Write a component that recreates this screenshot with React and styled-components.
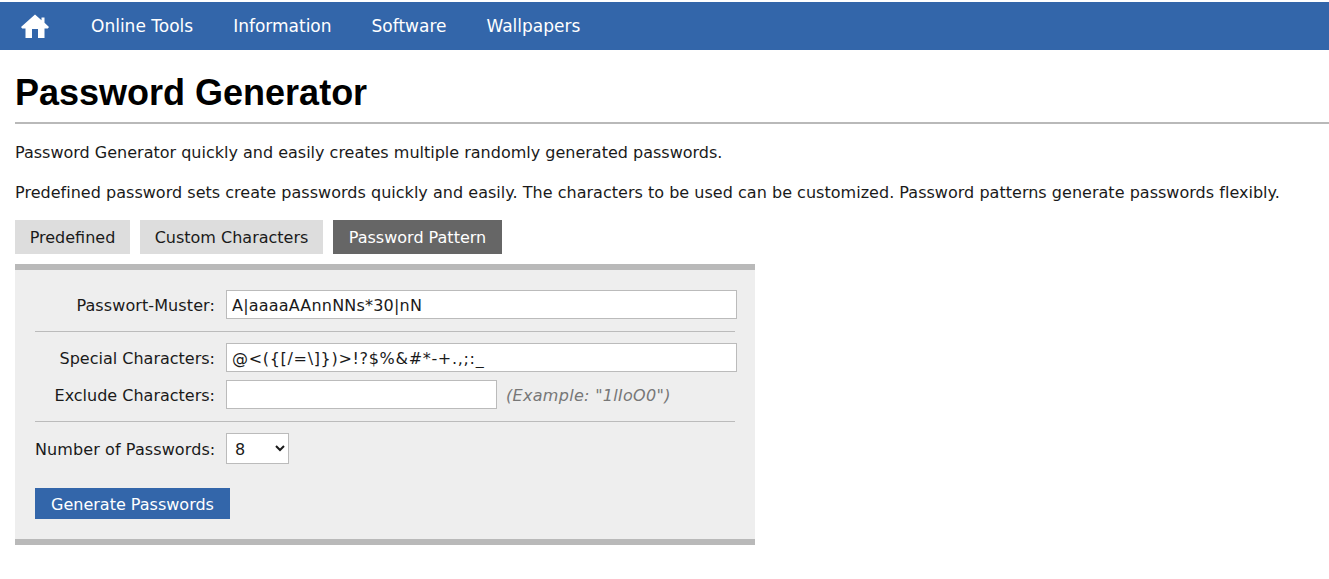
import React from 'react';
import styled, { createGlobalStyle } from 'styled-components';

const GlobalStyle = createGlobalStyle`
  html, body {
    margin: 0;
    padding: 0;
    background: #fff;
  }
  body {
    font-family: "DejaVu Sans", Verdana, sans-serif;
    font-size: 16px;
    color: #1a1a1a;
  }
`;

const Page = styled.div`
  padding-top: 2px;
`;

const NavBar = styled.nav`
  display: flex;
  align-items: center;
  height: 48px;
  background-color: #3366aa;
`;

const HomeLink = styled.a`
  display: flex;
  margin-left: 21px;
  margin-right: 22px;
`;

const NavLink = styled.a`
  color: #fff;
  padding: 0 20px;
  font-size: 17px;
`;

const Content = styled.main`
  padding: 0 0 0 15px;
`;

const Title = styled.h1`
  margin: 0;
  padding: 22px 0 8px;
  font-family: "Liberation Sans", Arial, sans-serif;
  font-size: 36px;
  line-height: 42px;
  font-weight: 700;
  color: #000;
  border-bottom: 2px solid #b9b9b9;
`;

const Paragraph = styled.p`
  margin: 0;
  height: 40px;
  line-height: 20px;
  letter-spacing: ${p => p.$spacing || 0}px;
  &:first-of-type {
    margin-top: 19px;
  }
`;

const Tabs = styled.div`
  display: flex;
  gap: 10px;
  margin-top: -3px;
`;

const Tab = styled.button`
  width: ${p => p.$width}px;
  height: 34px;
  padding: 0;
  border: 0;
  font: inherit;
  color: ${p => (p.$active ? '#fff' : '#1a1a1a')};
  background-color: ${p => (p.$active ? '#666' : '#ddd')};
`;

const Panel = styled.section`
  width: 700px;
  margin-top: 10px;
  padding: 20px 20px 20px;
  background-color: #eee;
  border-top: 6px solid #b9b9b9;
  border-bottom: 6px solid #b9b9b9;
`;

const Row = styled.div`
  display: flex;
  align-items: center;
  gap: 11px;
  margin-bottom: ${p => p.$gap || 0}px;
`;

const Label = styled.label`
  width: 180px;
  flex: none;
  padding-top: 1px;
  text-align: right;
  white-space: nowrap;
  letter-spacing: ${p => p.$spacing || 0}px;
`;

const TextInput = styled.input`
  box-sizing: border-box;
  width: ${p => p.$width}px;
  height: 29px;
  margin-right: ${p => p.$over || 0}px;
  padding: 1px 5px 0;
  border: 1px solid #bbb;
  background: #fff;
  font: inherit;
  color: #1a1a1a;
  letter-spacing: ${p => p.$spacing || 0}px;
  outline: none;
`;

const Hint = styled.em`
  color: #777;
  margin-left: -2px;
  padding-top: 1px;
  letter-spacing: 0.3px;
`;

const Divider = styled.hr`
  margin: 12px 0 11px;
  border: 0;
  border-top: 1px solid #bbb;
`;

const CountSelect = styled.select`
  box-sizing: border-box;
  width: 63px;
  height: 31px;
  padding: 1px 4px 0;
  border: 1px solid #bbb;
  background: #fff;
  font: inherit;
  color: #1a1a1a;
`;

const SubmitButton = styled.button`
  display: block;
  width: 195px;
  height: 31px;
  margin-top: 24px;
  padding: 1px 0 0;
  border: 0;
  font: inherit;
  color: #fff;
  background-color: #3366aa;
`;

const HomeIcon = () => (
  <svg width="28" height="24" viewBox="0 0 28 24" fill="#fff">
    <path d="M14 0.5 L20.5 6.2 V3.5 H23.5 V8.8 L28 13 L26.8 14.4 L23.5 14.4 V24 H17 V15 H11 V24 H4.5 V14.4 L1.2 14.4 L0 13 Z" />
  </svg>
);

export default function App() {
  return (
    <Page>
      <GlobalStyle />
      <NavBar>
        <HomeLink><HomeIcon /></HomeLink>
        <NavLink>Online Tools</NavLink>
        <NavLink>Information</NavLink>
        <NavLink>Software</NavLink>
        <NavLink>Wallpapers</NavLink>
      </NavBar>
      <Content>
        <Title>Password Generator</Title>
        <Paragraph>Password Generator quickly and easily creates multiple randomly generated passwords.</Paragraph>
        <Paragraph $spacing={0.025}>Predefined password sets create passwords quickly and easily. The characters to be used can be customized. Password patterns generate passwords flexibly.</Paragraph>
        <Tabs>
          <Tab $width={115}>Predefined</Tab>
          <Tab $width={183}>Custom Characters</Tab>
          <Tab $width={169} $active>Password Pattern</Tab>
        </Tabs>
        <Panel>
          <Row>
            <Label $spacing={0.1}>Passwort-Muster:</Label>
            <TextInput $width={511} $over={-2} $spacing={0.2} defaultValue="A|aaaaAAnnNNs*30|nN" />
          </Row>
          <Divider />
          <Row $gap={8}>
            <Label>Special Characters:</Label>
            <TextInput $width={511} $over={-2} $spacing={0.68} defaultValue={'@<({[/=\\]})>!?$%&#*-+.,;:_'} />
          </Row>
          <Row>
            <Label>Exclude Characters:</Label>
            <TextInput $width={271} />
            <Hint>(Example: "1lIoO0")</Hint>
          </Row>
          <Divider />
          <Row>
            <Label $spacing={0.1}>Number of Passwords:</Label>
            <CountSelect defaultValue="8">
              <option>8</option>
            </CountSelect>
          </Row>
          <SubmitButton>Generate Passwords</SubmitButton>
        </Panel>
      </Content>
    </Page>
  );
}
